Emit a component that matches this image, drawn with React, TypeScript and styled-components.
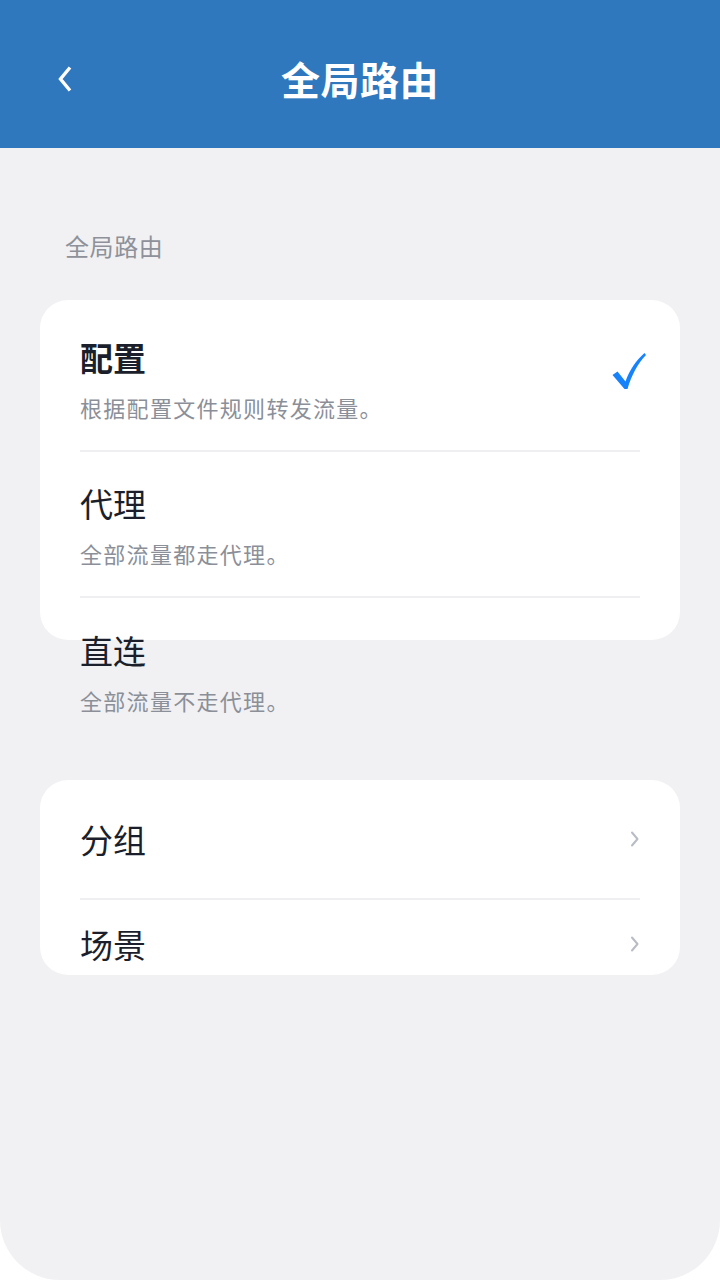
import styled, { createGlobalStyle } from "styled-components"
import type { FC } from "react"

const GlobalStyle = createGlobalStyle`
  html, body {
    margin: 0;
    padding: 0;
    background: #ffffff;
  }
  body {
    font-family: "Noto Sans CJK SC", "Noto Sans", sans-serif;
  }
`

const Page = styled.div`
  min-height: 1280px;
  background: #f1f1f3;
  border-radius: 0 0 60px 60px;
  overflow: hidden;
`

const Header = styled.header`
  height: 148px;
  background: #2f78be;
  display: flex;
  align-items: center;
  justify-content: center;
  position: relative;
`

const BackButton = styled.button`
  position: absolute;
  left: 48px;
  top: 59px;
  width: 34px;
  height: 40px;
  border: none;
  background: none;
  padding: 0;
  display: flex;
  align-items: center;
  justify-content: center;
`

const Title = styled.h1`
  margin: 0;
  color: #ffffff;
  font-size: 39px;
  font-weight: 700;
  letter-spacing: 0.5px;
  padding-top: 8px;
`

const Content = styled.main`
  padding: 80px 40px 0;
  display: flex;
  flex-direction: column;
`

const SectionLabel = styled.div`
  padding-left: 25px;
  font-size: 24px;
  line-height: 36px;
  letter-spacing: 0.6px;
  color: #8e9199;
  margin-bottom: 36px;
`

const Card = styled.section<{ $height: number; $padTop?: number }>`
  background: #ffffff;
  border-radius: 28px;
  height: ${p => p.$height}px;
  padding-top: ${p => p.$padTop ?? 0}px;
  box-sizing: border-box;
  overflow: visible;
  display: flex;
  flex-direction: column;
`

const Row = styled.div<{ $height: number; $divider?: boolean; $shift?: number }>`
  flex: none;
  height: ${p => p.$height}px;
  margin: 0 40px;
  display: flex;
  align-items: center;
  box-sizing: border-box;
  padding-top: ${p => p.$shift ?? 0}px;
  border-bottom: ${p => (p.$divider ? "2px solid #efeff1" : "none")};
`

const RowText = styled.div`
  flex: 1;
  display: flex;
  flex-direction: column;
  gap: 13px;
`

const RowTitle = styled.div<{ $bold?: boolean }>`
  font-size: 33px;
  line-height: 44px;
  color: #1b1f2b;
  font-weight: ${p => (p.$bold ? 700 : 400)};
`

const RowSubtitle = styled.div`
  font-size: 22px;
  line-height: 30px;
  letter-spacing: 1.3px;
  color: #8b8f98;
`

const CheckIcon = styled.svg`
  flex: none;
  width: 34px;
  height: 38px;
  margin-right: -6px;
  margin-bottom: 14px;
`

const ChevronIcon = styled.svg`
  flex: none;
  width: 10px;
  height: 16px;
`

const Gap = styled.div`
  height: 140px;
`

const Check: FC = () => (
  <CheckIcon viewBox="0 0 34 38">
    <path
      d="M0.5 23 L5.5 19.5 L13.5 29.5 C17.5 18 24 8.5 32.5 1 L34 3 C26 11.5 20 22 15.5 37 L12.5 37 Z"
      fill="#1683fb"
    />
  </CheckIcon>
)

const Chevron: FC = () => (
  <ChevronIcon viewBox="0 0 10 16">
    <path d="M2 1.5 L7.5 8 L2 14.5" fill="none" stroke="#b7bcc5" strokeWidth="2" strokeLinecap="round" strokeLinejoin="round" />
  </ChevronIcon>
)

type Mode = { title: string; desc: string; selected?: boolean }

const modes: Mode[] = [
  { title: "配置", desc: "根据配置文件规则转发流量。", selected: true },
  { title: "代理", desc: "全部流量都走代理。" },
  { title: "直连", desc: "全部流量不走代理。" },
]

export default function App() {
  return (
    <>
      <GlobalStyle />
      <Page>
        <Header>
          <BackButton aria-label="返回">
            <svg width="16" height="26" viewBox="0 0 16 26">
              <path d="M13 1.5 L3.5 13 L13 24.5" fill="none" stroke="#ffffff" strokeWidth="3.4" strokeLinejoin="miter" />
            </svg>
          </BackButton>
          <Title>全局路由</Title>
        </Header>

        <Content>
          <SectionLabel>全局路由</SectionLabel>

          <Card $height={340} $padTop={6}>
            {modes.map((m, i) => (
              <Row key={m.title} $height={146} $divider={i < modes.length - 1}>
                <RowText>
                  <RowTitle $bold={m.selected}>{m.title}</RowTitle>
                  <RowSubtitle>{m.desc}</RowSubtitle>
                </RowText>
                {m.selected && <Check />}
              </Row>
            ))}
          </Card>

          <Gap />

          <Card $height={195}>
            <Row $height={120} $divider>
              <RowText>
                <RowTitle>分组</RowTitle>
              </RowText>
              <Chevron />
            </Row>
            <Row $height={75} $shift={12}>
              <RowText>
                <RowTitle>场景</RowTitle>
              </RowText>
              <Chevron />
            </Row>
          </Card>
        </Content>
      </Page>
    </>
  )
}
